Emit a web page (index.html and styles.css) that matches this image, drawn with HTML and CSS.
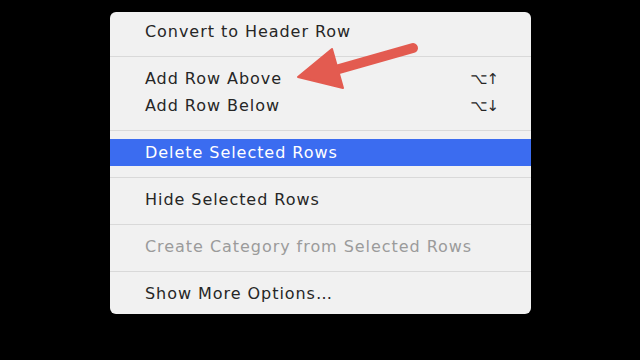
FILE: index.html
```html
<!DOCTYPE html>
<html lang="en">

<head>
  <meta charset="UTF-8">
  <title>Table Row Menu</title>
  <link rel="stylesheet" href="styles.css">
</head>

<body>
  <div id="context-menu">
    <div class="menu-item">Convert to Header Row</div>
    <div class="separator"></div>
    <div class="menu-item">Add Row Above <span class="shortcut">&#x2325;&#x2191;</span></div>
    <div class="menu-item">Add Row Below <span class="shortcut">&#x2325;&#x2193;</span></div>
    <div class="separator"></div>
    <div class="menu-item selected">Delete Selected Rows</div>
    <div class="separator"></div>
    <div class="menu-item">Hide Selected Rows</div>
    <div class="separator"></div>
    <div class="menu-item disabled">Create Category from Selected Rows</div>
    <div class="separator"></div>
    <div class="menu-item">Show More Options&hellip;</div>
  </div>

  <!-- Red pointer arrow drawn over the menu -->
  <svg id="pointer-arrow" width="640" height="360" viewBox="0 0 640 360">
    <line x1="413" y1="48" x2="332" y2="71" stroke="#e35b50" stroke-width="10" stroke-linecap="round" />
    <polygon points="298,77 332,49 343,88" fill="#e35b50" stroke="#e35b50" stroke-width="2" stroke-linejoin="round" />
  </svg>
</body>

</html>
```

FILE: styles.css
```css
body {
  margin: 0;
  width: 640px;
  height: 360px;
  background-color: #000;
  font-family: "DejaVu Sans", Verdana, sans-serif;
  overflow: hidden;
  position: relative;
}

#context-menu {
  width: 421px;
  margin: 12px 0 0 110px;
  padding: 6px 0 7px 0;
  box-sizing: border-box;
  background-color: #f1f1f1;
  border-radius: 6px;
  display: flex;
  flex-direction: column;
}

.menu-item {
  display: flex;
  justify-content: space-between;
  align-items: center;
  height: 27px;
  padding: 0 33px 0 35px;
  font-size: 16px;
  letter-spacing: 0.95px;
  color: #262626;
}

.menu-item.selected {
  background-color: #3b6cf0;
  color: #fff;
}

.menu-item.disabled {
  color: #9b9b9b;
}

.shortcut {
  font-size: 15px;
  letter-spacing: -1px;
}

.separator {
  height: 1px;
  margin: 11px 0 8px 0;
  background-color: #d9d9d9;
}

/* arrow sits on top of everything */
#pointer-arrow {
  position: absolute;
  top: 0;
  left: 0;
}
```
